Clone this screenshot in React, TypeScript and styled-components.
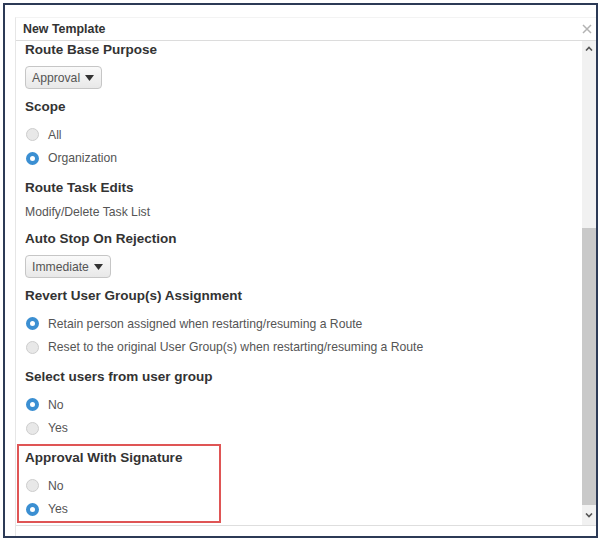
import styled, { createGlobalStyle } from "styled-components";

const GlobalStyle = createGlobalStyle`
  html, body {
    margin: 0;
    padding: 0;
    background: #fff;
  }
  body {
    font-family: "Liberation Sans", Arial, sans-serif;
  }
`;

const Frame = styled.div`
  box-sizing: border-box;
  margin: 3px 0 0 3px;
  width: 595px;
  height: 535px;
  border: 2px solid #2c3a56;
  padding: 12px 0 0 10px;
  display: flex;
  flex-direction: column;
`;

const Dialog = styled.div`
  flex: 1;
  display: flex;
  flex-direction: column;
  background: #fff;
  border-left: 1px solid #e6e6e6;
  border-top: 1px solid #f3f3f3;
`;

const Header = styled.div`
  height: 22px;
  display: flex;
  align-items: center;
  justify-content: space-between;
  padding: 0 4px 0 7px;
  border-bottom: 1px solid #dcdcdc;
`;

const Title = styled.h1`
  margin: 0;
  font-size: 12.4px;
  font-weight: bold;
  color: #333;
`;

const CloseButton = styled.button`
  border: 0;
  background: none;
  padding: 0;
  width: 10px;
  height: 10px;
  display: flex;
  cursor: pointer;
`;

const Body = styled.div`
  height: 484px;
  display: flex;
  overflow: hidden;
`;

const Content = styled.div`
  flex: 1;
  margin-top: -2px;
  padding-left: 9px;
  display: flex;
  flex-direction: column;
  gap: 7px;
`;

const Group = styled.section`
  display: flex;
  flex-direction: column;
  align-items: flex-start;
`;

const Highlight = styled(Group)`
  box-sizing: border-box;
  width: 204px;
  margin: -3px 0 0 -8px;
  padding: 1px 0 0 6px;
  border: 2px solid #df5555;
`;

const Heading = styled.h2`
  margin: 0 0 5px;
  font-size: 13.5px;
  line-height: 22px;
  font-weight: bold;
  color: #333;
`;

const Note = styled.div`
  font-size: 12.2px;
  line-height: 17px;
  color: #555;
`;

const Select = styled.button`
  box-sizing: border-box;
  height: 23px;
  display: inline-flex;
  align-items: center;
  gap: 5px;
  padding: 0 7px 0 6px;
  border: 1px solid #c6c6c6;
  border-radius: 4px;
  background: linear-gradient(#fafafa, #e8e8e8);
  font-family: inherit;
  font-size: 12.2px;
  color: #555;
`;

const Option = styled.label`
  height: 23.5px;
  display: flex;
  align-items: center;
  gap: 9px;
  padding-left: 1px;
  font-size: 12.2px;
  color: #555;
`;

const RadioDot = styled.span<{ $checked?: boolean }>`
  box-sizing: border-box;
  width: 13px;
  height: 13px;
  border-radius: 50%;
  background: ${(p) => (p.$checked ? "#fff" : "#e8e8e8")};
  border: ${(p) => (p.$checked ? "4px solid #3b8fd2" : "1px solid #cdcdcd")};
`;

const Scrollbar = styled.div`
  width: 14px;
  background: #f1f1f1;
  display: flex;
  flex-direction: column;
`;

const ScrollButton = styled.div<{ $h: number }>`
  height: ${(p) => p.$h}px;
  display: flex;
  align-items: center;
  justify-content: center;
`;

const Track = styled.div`
  flex: 1;
  display: flex;
  flex-direction: column;
  justify-content: flex-end;
`;

const Thumb = styled.div`
  height: 277px;
  background: #c9c9c9;
`;

const Footer = styled.div`
  flex: 1;
  border-top: 1px solid #dedede;
`;

const Caret = () => (
  <svg width="9" height="6" viewBox="0 0 9 6">
    <polygon points="0,0 9,0 4.5,6" fill="#333" />
  </svg>
);

const Chevron = ({ up }: { up?: boolean }) => (
  <svg width="8" height="5" viewBox="0 0 8 5">
    <polyline
      points={up ? "1,4.5 4,1.5 7,4.5" : "1,0.5 4,3.5 7,0.5"}
      fill="none"
      stroke="#555"
      strokeWidth="1.6"
    />
  </svg>
);

function Radio({ label, checked }: { label: string; checked?: boolean }) {
  return (
    <Option>
      <RadioDot $checked={checked} />
      {label}
    </Option>
  );
}

export default function App() {
  return (
    <>
      <GlobalStyle />
      <Frame>
        <Dialog>
          <Header>
            <Title>New Template</Title>
            <CloseButton aria-label="Close">
              <svg width="10" height="10" viewBox="0 0 10 10">
                <path d="M1 1 L9 9 M9 1 L1 9" stroke="#b3b3b3" strokeWidth="1.5" />
              </svg>
            </CloseButton>
          </Header>
          <Body>
            <Content>
              <Group>
                <Heading>Route Base Purpose</Heading>
                <Select>
                  Approval <Caret />
                </Select>
              </Group>
              <Group>
                <Heading>Scope</Heading>
                <Radio label="All" />
                <Radio label="Organization" checked />
              </Group>
              <Group>
                <Heading>Route Task Edits</Heading>
                <Note>Modify/Delete Task List</Note>
              </Group>
              <Group>
                <Heading>Auto Stop On Rejection</Heading>
                <Select>
                  Immediate <Caret />
                </Select>
              </Group>
              <Group>
                <Heading>Revert User Group(s) Assignment</Heading>
                <Radio label="Retain person assigned when restarting/resuming a Route" checked />
                <Radio label="Reset to the original User Group(s) when restarting/resuming a Route" />
              </Group>
              <Group>
                <Heading>Select users from user group</Heading>
                <Radio label="No" checked />
                <Radio label="Yes" />
              </Group>
              <Highlight>
                <Heading>Approval With Signature</Heading>
                <Radio label="No" />
                <Radio label="Yes" checked />
              </Highlight>
            </Content>
            <Scrollbar>
              <ScrollButton $h={14}>
                <Chevron up />
              </ScrollButton>
              <Track>
                <Thumb />
              </Track>
              <ScrollButton $h={20}>
                <Chevron />
              </ScrollButton>
            </Scrollbar>
          </Body>
          <Footer />
        </Dialog>
      </Frame>
    </>
  );
}
